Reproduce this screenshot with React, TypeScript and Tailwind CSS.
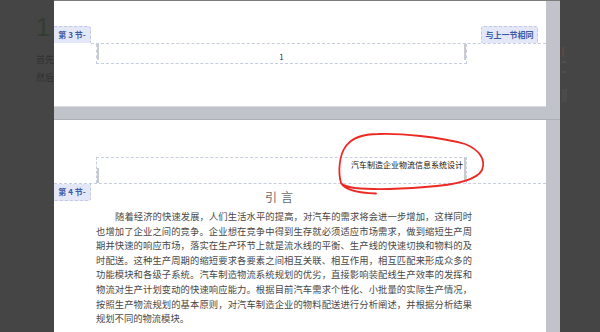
import React from 'react';

const cjk = { fontFamily: '"Noto Sans CJK SC", "Liberation Sans", sans-serif' };

const bodyLines = [
  '也增加了企业之间的竞争。企业想在竞争中得到生存就必须适应市场需求，做到缩短生产周',
  '期并快速的响应市场，落实在生产环节上就是流水线的平衡、生产线的快速切换和物料的及',
  '时配送。这种生产周期的缩短要求各要素之间相互关联、相互作用，相互匹配来形成众多的',
  '功能模块和各级子系统。汽车制造物流系统规划的优劣，直接影响装配线生产效率的发挥和',
  '物流对生产计划变动的快速响应能力。根据目前汽车需求个性化、小批量的实际生产情况，',
  '按照生产物流规划的基本原则，对汽车制造企业的物料配送进行分析阐述，并根据分析结果',
];

// Word-style section tab ("第 3 节-", "与上一节相同")
const SectionTab: React.FC<{ label: string; className?: string }> = ({ label, className = '' }) => (
  <div
    className={`h-[17px] flex items-center justify-center bg-[#e4e7f8] border-dashed border-[#c3c9e3] text-[8px] leading-none text-[#3b5ba6] font-bold ${className}`}
  >
    {label}
  </div>
);

const CornerMark: React.FC<{ className?: string }> = ({ className = '' }) => (
  <div className={`w-[2px] bg-[#cbcbcb] ${className}`} />
);

export default function App() {
  return (
    <div className="relative w-[600px] h-[332px] overflow-hidden flex bg-[#454545]" style={cjk}>
      {/* navigation pane (left, behind page) */}
      <div className="w-[54px] shrink-0 bg-[#454545] pl-[36px] pt-[12px] flex flex-col">
        <div className="text-[25px] leading-[30px] text-[#333d33]" style={{ fontFamily: '"Liberation Sans", sans-serif' }}>1</div>
        <div className="mt-[13px] text-[9px] leading-[10px] text-[#303030] whitespace-nowrap">首先</div>
        <div className="mt-[8px] text-[9px] leading-[10px] text-[#303030] whitespace-nowrap">然后</div>
      </div>

      {/* document area */}
      <div className="w-[506px] shrink-0 bg-[#c1c3cb] border-t border-[#7c7c7c] flex flex-col">
        {/* page 3 footer */}
        <div className="w-[492px] h-[106px] bg-white border-b border-[#dadbe0] flex flex-col pt-[25px]">
          <div className="flex justify-between">
            <SectionTab label="第 3 节-" className="w-[37px] border-t border-r rounded-tr-[3px]" />
            <SectionTab label="与上一节相同" className="w-[57px] mr-[8px] border-t border-l border-r rounded-t-[3px]" />
          </div>
          <div className="ml-[37px] border-t border-dashed border-[#c6cde0]" />
          <div className="ml-[42px] w-[371px] h-[20px] border-l border-r border-b border-dashed border-[#c6cde0] flex">
            <CornerMark className="h-[16px]" />
            <div className="flex-1 flex items-end justify-center pb-[1px] text-[8px] leading-[10px] text-[#333]">1</div>
            <CornerMark className="h-[16px]" />
          </div>
        </div>

        <div className="h-[13px] border-b border-[#aeb0b8]" />

        {/* page 4 header + body */}
        <div className="w-[492px] flex-1 bg-white flex flex-col pt-[37px]">
          <div className="ml-[42px] w-[371px] h-[26px] border-l border-r border-t border-dashed border-[#c6cde0] flex">
            <CornerMark className="h-[15px] mt-[10px]" />
            <div className="flex-1 text-right text-[8px] leading-[11px] text-[#111] pr-[1px] pt-[1px]">汽车制造企业物流信息系统设计</div>
            <CornerMark className="h-[22px]" />
          </div>
          <div className="relative border-t border-dashed border-[#c6cde0]">
            <SectionTab label="第 4 节-" className="absolute left-0 top-0 w-[37px] border-b border-r rounded-br-[3px]" />
            <div className="ml-[42px] w-[376px] flex flex-col">
              <div className="mt-[6px] pr-[6px] text-center text-[12px] leading-[14px] tracking-[4px] text-[#6a6a6a]">引言</div>
              <div className="mt-[5px] text-[9.3px] leading-[14.6px] text-[#484848]">
                <div className="pl-[19px] text-justify [text-align-last:justify]">
                  随着经济的快速发展，人们生活水平的提高，对汽车的需求将会进一步增加，这样同时
                </div>
                {bodyLines.map((line) => (
                  <div key={line} className="text-justify [text-align-last:justify]">
                    {line}
                  </div>
                ))}
                <div>规划不同的物流模块。</div>
              </div>
            </div>
          </div>
        </div>
      </div>

      {/* right pane */}
      <div className="flex-1 bg-[#454545] flex flex-col pl-[2px] pt-[47px]">
        <div className="w-[2px] h-[10px] bg-[#5e4843]" />
        <div className="mt-[4px] w-[4px] h-[2px] bg-[#505050]" />
        <div className="mt-[8px] w-[4px] h-[2px] bg-[#505050]" />
        <div className="mt-[16px] w-[5px] h-[13px] bg-[#4b4b4b]" />
      </div>

      {/* red hand-drawn annotation */}
      <svg className="absolute inset-0 pointer-events-none" width="600" height="332" viewBox="0 0 600 332">
        <path
          d="M 376 193.5 C 360 193, 345 190, 341 183 C 338 172, 339 155, 346 146 C 352 138, 362 134, 378 134 C 400 133, 440 137, 465 144 C 480 150, 486 160, 482 170 C 477 180, 455 185, 425 187 C 400 189, 375 190, 355 188 C 348 187, 344 186, 342 184"
          fill="none"
          stroke="#ec2a24"
          strokeWidth="1.8"
          strokeLinecap="round"
        />
      </svg>
    </div>
  );
}
